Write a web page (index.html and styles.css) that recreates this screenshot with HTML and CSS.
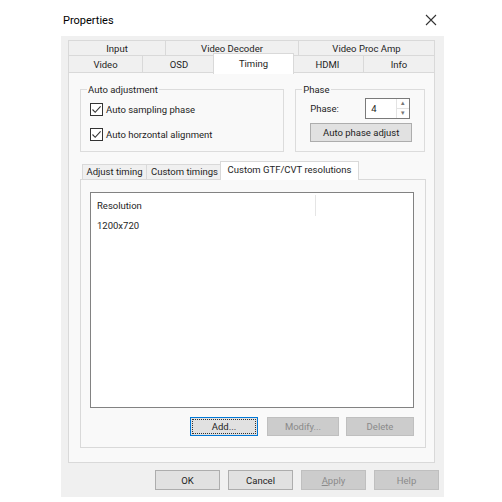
FILE: index.html
```html
<!DOCTYPE html>
<html>
<head>
<meta charset="utf-8">
<link rel="stylesheet" href="styles.css">
</head>
<body>
<div class="window">
  <div class="titlebar">
    <span class="title">Properties</span>
    <svg class="close" width="12" height="12" viewBox="0 0 12 12"><path d="M1 1 L11 11 M11 1 L1 11" stroke="#333" stroke-width="1.1" fill="none"/></svg>
  </div>
  <div class="dialog">
    <div class="tabs">
      <div class="tabrow row1">
        <div class="tab w-input">Input</div>
        <div class="tab w-decoder">Video Decoder</div>
        <div class="tab w-procamp last">Video Proc Amp</div>
      </div>
      <div class="tabrow row2">
        <div class="tab w-video">Video</div>
        <div class="tab w-osd">OSD</div>
        <div class="tab w-timing selected">Timing</div>
        <div class="tab w-hdmi">HDMI</div>
        <div class="tab w-info last">Info</div>
      </div>
    </div>
    <div class="panel">
      <div class="groups">
        <fieldset class="group g-auto">
          <legend>Auto adjustment</legend>
          <div class="gbody auto-body">
            <label class="check"><span class="box"><svg width="11" height="11" viewBox="0 0 11 11"><path d="M1.5 5.5 L4.2 8.3 L9.6 2.4" stroke="#333" stroke-width="1.1" fill="none"/></svg></span>Auto sampling phase</label>
            <label class="check"><span class="box"><svg width="11" height="11" viewBox="0 0 11 11"><path d="M1.5 5.5 L4.2 8.3 L9.6 2.4" stroke="#333" stroke-width="1.1" fill="none"/></svg></span>Auto horzontal alignment</label>
          </div>
        </fieldset>
        <fieldset class="group g-phase">
          <legend>Phase</legend>
          <div class="gbody phase-body">
            <div class="phase-row">
              <span class="phase-label">Phase:</span>
              <div class="spin">
                <span class="spin-val">4</span>
                <div class="spin-btns">
                  <span class="arrow">&#9652;</span>
                  <span class="arrow">&#9662;</span>
                </div>
              </div>
            </div>
            <div class="btn btn-phase">Auto phase adjust</div>
          </div>
        </fieldset>
      </div>
      <div class="inner">
        <div class="itabs">
          <div class="itab w-adjust">Adjust timing</div>
          <div class="itab w-ctim">Custom timings</div>
          <div class="itab w-gtf selected">Custom GTF/CVT resolutions</div>
        </div>
        <div class="ipanel">
          <div class="list">
            <div class="list-head">
              <div class="col1">Resolution</div>
              <div class="col2"></div>
            </div>
            <div class="list-row">1200x720</div>
          </div>
          <div class="ibuttons">
            <div class="btn focused"><span class="focus">Add...</span></div>
            <div class="btn disabled w-modify">Modify...</div>
            <div class="btn disabled w-delete">Delete</div>
          </div>
        </div>
      </div>
    </div>
    <div class="footer">
      <div class="btn fbtn">OK</div>
      <div class="btn fbtn">Cancel</div>
      <div class="btn fbtn disabled"><span><u>A</u>pply</span></div>
      <div class="btn fbtn disabled">Help</div>
    </div>
  </div>
</div>
</body>
</html>
```
FILE: styles.css
```css
* { box-sizing: border-box; }
html, body { margin: 0; padding: 0; background: #fff; }
body {
  font-family: Roboto, "Noto Sans", sans-serif;
  font-size: 9.5px;
  color: #1e1e1e;
}
.window {
  margin-left: 61px;
  width: 383px;
}
.titlebar {
  height: 36px;
  display: flex;
  align-items: center;
  justify-content: space-between;
  padding: 0 7px 0 2px;
  background: #fff;
}
.title { font-size: 11px; color: #000; margin-top: 4px; }
.close { margin-top: 4px; }

.dialog {
  background: #f0f0f0;
  height: 461px;
  padding: 4px 9px 0 7px;
}
.tabs { display: flex; flex-direction: column; }
.tabrow { display: flex; }
.row1 { height: 15px; }
.row2 { height: 18px; }
.tab {
  border: 1px solid #d9d9d9;
  border-right: none;
  border-bottom: none;
  background: #f0f0f0;
  display: flex;
  align-items: center;
  justify-content: center;
  line-height: 1;
  padding-top: 2px;
}
.tab.last { border-right: 1px solid #d9d9d9; }
.row2 .tab { border-bottom: 1px solid #d9d9d9; }
.w-input { width: 97px; }
.w-decoder { width: 133px; }
.w-procamp { width: 137px; }
.w-video { width: 74px; }
.w-osd { width: 73px; }
.w-timing { width: 77px; }
.w-hdmi { width: 71px; }
.w-info { width: 72px; }
.tab.selected {
  position: relative;
  background: #fff;
  margin: -2px -2px -1px -2px;
  width: 81px;
  height: 21px;
  border-right: 1px solid #d9d9d9;
  border-bottom: none;
  z-index: 1;
  padding-bottom: 3px;
}
.tab.selected + .tab { border-left: none; }

.panel {
  width: 367px;
  height: 390px;
  border: 1px solid #d9d9d9;
  border-top: none;
  background: #f9f9f9;
  padding: 10px 9px 0 11px;
}
.groups { display: flex; gap: 11px; }
.group {
  margin: 0;
  border: 1px solid #dcdcdc;
  height: 69px;
  padding: 0;
  min-width: 0;
}
.group legend {
  margin-left: 6px;
  padding: 0 1px;
  line-height: 13px;
}
.g-auto { width: 206px; }
.g-phase { width: 131px; }
.auto-body { padding: 7px 0 0 9px; }
.phase-body { padding: 2px 0 0 14px; }
.check {
  display: flex;
  align-items: center;
  height: 13px;
  margin-bottom: 12px;
  gap: 3px;
}
.box {
  width: 13px;
  height: 13px;
  border: 1px solid #333;
  background: #fff;
  display: flex;
  align-items: center;
  justify-content: center;
}
.phase-row {
  display: flex;
  align-items: center;
  height: 21px;
}
.phase-label { width: 55px; }
.spin {
  width: 45px;
  height: 21px;
  border: 1px solid #7a7a7a;
  background: #fff;
  display: flex;
}
.spin-val { flex: 1; padding-left: 5px; display: flex; align-items: center; }
.spin-btns {
  width: 13px;
  display: flex;
  flex-direction: column;
  border-left: 1px solid #e3e3e3;
}
.arrow {
  flex: 1;
  display: flex;
  align-items: center;
  justify-content: center;
  font-size: 7px;
  color: #777;
  line-height: 1;
}
.arrow + .arrow { border-top: 1px solid #e3e3e3; }

.btn {
  height: 20px;
  background: #e1e1e1;
  border: 1px solid #adadad;
  display: flex;
  align-items: center;
  justify-content: center;
  color: #1e1e1e;
}
.btn-phase { width: 102px; margin-top: 4px; height: 19px; }
.btn.disabled { background: #cccccc; border-color: #bfbfbf; color: #8a8a8a; }
.btn.focused {
  width: 68px;
  border-color: #0078d7;
  padding: 1px;
}
.focus {
  flex: 1;
  align-self: stretch;
  border: 1px dotted #333;
  display: flex;
  align-items: center;
  justify-content: center;
}
.w-modify { width: 72px; }
.w-delete { width: 68px; }

.inner { margin-top: 12px; }
.itabs { display: flex; padding-left: 2px; height: 15px; }
.itab {
  border: 1px solid #d9d9d9;
  border-right: none;
  border-bottom: none;
  background: #f0f0f0;
  display: flex;
  align-items: center;
  justify-content: center;
  line-height: 1;
}
.w-adjust { width: 64px; }
.w-ctim { width: 76px; }
.w-gtf { width: 135px; }
.itab.selected {
  position: relative;
  background: #fff;
  margin: -3px -2px -1px -2px;
  width: 139px;
  height: 19px;
  border-right: 1px solid #d9d9d9;
  z-index: 1;
  padding-bottom: 2px;
}
.ipanel {
  width: 346px;
  height: 269px;
  border: 1px solid #d9d9d9;
  background: #f9f9f9;
  padding: 12px 11px 0 9px;
}
.list {
  width: 324px;
  height: 216px;
  border: 1px solid #828282;
  background: #fff;
}
.list-head { display: flex; height: 21px; margin-top: 2px; }
.col1 { width: 225px; padding-left: 6px; display: flex; align-items: center; border-right: 1px solid #e5e5e5; }
.list-row { padding-left: 6px; height: 18px; display: flex; align-items: center; }
.ibuttons {
  display: flex;
  justify-content: flex-end;
  margin-top: 9px;
}
.ibuttons .btn { height: 19px; }
.ibuttons .btn + .btn { margin-left: 9px; }
.ibuttons .btn.w-delete { margin-left: 7px; }

.footer {
  display: flex;
  justify-content: flex-end;
  gap: 8px;
  margin-top: 7px;
  margin-right: -4px;
}
.fbtn { width: 65px; height: 20px; }
.fbtn u { text-decoration: underline; }
```
